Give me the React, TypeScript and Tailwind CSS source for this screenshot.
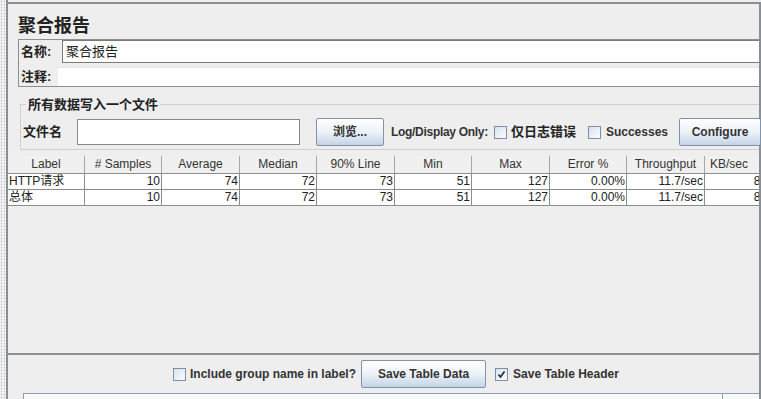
const FONT = "font-['Liberation_Sans','Noto_Sans_CJK_SC',sans-serif]"

const COLUMNS = [
  { label: 'Label', width: 'w-[77px]', head: 'text-center' },
  { label: '# Samples', width: 'w-[77px]', head: 'text-center' },
  { label: 'Average', width: 'w-[78px]', head: 'text-center' },
  { label: 'Median', width: 'w-[77px]', head: 'text-center' },
  { label: '90% Line', width: 'w-[78px]', head: 'text-center' },
  { label: 'Min', width: 'w-[77px]', head: 'text-center' },
  { label: 'Max', width: 'w-[78px]', head: 'text-center' },
  { label: 'Error %', width: 'w-[77px]', head: 'text-center' },
  { label: 'Throughput', width: 'w-[78px]', head: 'text-center' },
  { label: 'KB/sec', width: 'w-[74px]', head: 'text-left pl-[5px]' },
]

const ROWS = [
  ['HTTP请求', '10', '74', '72', '73', '51', '127', '0.00%', '11.7/sec', '8.35'],
  ['总体', '10', '74', '72', '73', '51', '127', '0.00%', '11.7/sec', '8.35'],
]

function Checkbox({ checked = false }: { checked?: boolean }) {
  return (
    <span className="inline-flex items-center justify-center w-[13px] h-[13px] shrink-0 border border-[#7d8ea8] bg-linear-to-br from-[#d6e1ee] to-[#fbfcfe]">
      {checked && (
        <svg width="9" height="9" viewBox="0 0 9 9">
          <path d="M1.5 4.5 L3.5 7 L7.5 1.5" fill="none" stroke="#222" strokeWidth="1.6" />
        </svg>
      )}
    </span>
  )
}

function Button({ children, className }: { children: React.ReactNode; className: string }) {
  return (
    <button
      className={`${className} shrink-0 whitespace-nowrap flex items-center justify-center border border-[#8093ad] rounded-[2px] bg-linear-to-b from-[#ffffff] via-[#edf2f8] to-[#c3d4e7] text-[12px] font-bold text-[#333]`}
    >
      {children}
    </button>
  )
}

export default function App() {
  return (
    <div className={`${FONT} w-[761px] h-[399px] overflow-hidden flex bg-[#eeeeee] text-[#333]`}>
      {/* dotted splitter grip */}
      <div className="w-[6px] h-full shrink-0 bg-[radial-gradient(#b9b9b9_0.8px,transparent_0.9px)] bg-[length:3px_3px]" />
      <div className="w-[2px] h-full shrink-0 bg-[#8a8f96]" />

      <div className="flex-1 flex flex-col mt-[2px] border-t-2 border-r-2 border-[#8a8f96] min-w-0">
        {/* title */}
        <div className="h-[35px] pl-[10px] pt-[12px]">
          <h1 className="text-[18px] leading-[20px] font-bold text-[#222]">聚合报告</h1>
        </div>

        {/* name / comment */}
        <div className="ml-[10px] h-[48px] border-t border-l border-b border-[#8e8e8e] flex flex-col">
          <div className="flex items-center h-[23px]">
            <span className="w-[43px] shrink-0 pl-[2px] text-[13px] font-bold text-[#222]">名称:</span>
            <div className="flex-1 h-[23px] bg-white border-t border-b border-l border-[#7a7a7a] pl-[3px] text-[13px] leading-[21px] text-[#222]">
              聚合报告
            </div>
          </div>
          <div className="flex items-center mt-[4px] h-[19px]">
            <span className="w-[39px] shrink-0 pl-[2px] text-[13px] font-bold text-[#222]">注释:</span>
            <div className="flex-1 h-[19px] bg-white border-t border-[#e6e6e6]" />
          </div>
        </div>

        {/* write to file */}
        <fieldset className="mt-[11px] ml-[12px] border border-r-0 border-[#cfcfcf] pl-[2px] pb-[3px] min-w-0">
          <legend className="ml-[3px] px-[2px] text-[13px] leading-[13px] font-bold text-[#222]">
            所有数据写入一个文件
          </legend>
          <div className="flex items-center pt-[7px] whitespace-nowrap">
            <span className="w-[54px] shrink-0 text-[13px] font-bold text-[#222]">文件名</span>
            <div className="w-[223px] shrink-0 h-[26px] bg-white border border-[#8a8a8a]" />
            <Button className="ml-[16px] w-[68px] h-[28px]">浏览...</Button>
            <span className="ml-[7px] shrink-0 text-[12px] font-bold tracking-[-0.3px]">Log/Display Only:</span>
            <span className="ml-[6px] shrink-0 flex"><Checkbox /></span>
            <span className="ml-[4px] shrink-0 text-[13px] font-bold text-[#222]">仅日志错误</span>
            <span className="ml-[12px] shrink-0 flex"><Checkbox /></span>
            <span className="ml-[5px] shrink-0 text-[12px] font-bold">Successes</span>
            <Button className="ml-[11px] w-[82px] h-[28px]">Configure</Button>
          </div>
        </fieldset>

        {/* results table */}
        <div className="mt-[6px] flex-1 overflow-hidden text-[12px] text-[#222]">
          <div className="flex h-[18px] border-b border-[#8c8c8c] bg-[#f0f0f0]">
            {COLUMNS.map((c) => (
              <div
                key={c.label}
                className={`${c.width} ${c.head} shrink-0 border-r border-[#a8a8a8] leading-[17px] text-[#333] whitespace-nowrap`}
              >
                {c.label}
              </div>
            ))}
          </div>
          {ROWS.map((row) => (
            <div key={row[0]} className="flex h-[16px] bg-white border-b border-[#8c8c8c]">
              {row.map((cell, i) => (
                <div
                  key={i}
                  className={`${COLUMNS[i].width} shrink-0 border-r border-[#8c8c8c] leading-[15px] px-[1px] whitespace-nowrap overflow-hidden ${
                    i === 0 ? 'text-left' : 'text-right'
                  }`}
                >
                  {cell}
                </div>
              ))}
            </div>
          ))}
        </div>

        {/* save options */}
        <div className="h-[40px] shrink-0 border-t-2 border-[#8a8f96] flex items-center pl-[165px] whitespace-nowrap">
          <Checkbox />
          <span className="ml-[4px] text-[12px] font-bold">Include group name in label?</span>
          <Button className="ml-[5px] w-[125px] h-[28px]">Save Table Data</Button>
          <span className="ml-[9px] flex"><Checkbox checked /></span>
          <span className="ml-[5px] text-[12px] font-bold">Save Table Header</span>
        </div>

        {/* status strip */}
        <div className="flex h-[6px] shrink-0 pl-[15px]">
          <div className="flex-1 flex border-t border-l border-[#8a9bbb] bg-[#f7f9fc]">
            <div className="w-[699px] border-r border-[#8a9bbb]" />
          </div>
        </div>
      </div>
    </div>
  )
}
